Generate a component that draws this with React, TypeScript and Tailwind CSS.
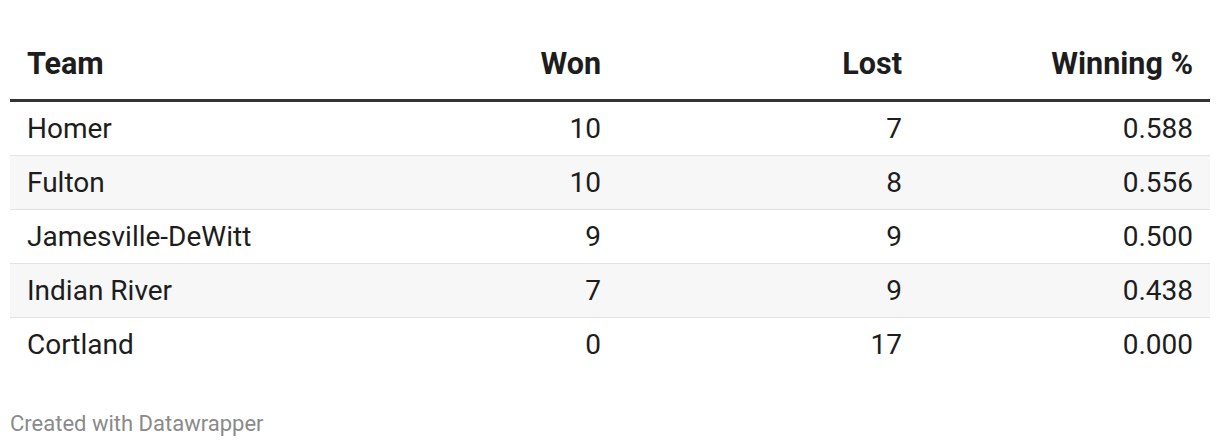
const rows = [
  { team: 'Homer', won: 10, lost: 7, pct: '0.588' },
  { team: 'Fulton', won: 10, lost: 8, pct: '0.556' },
  { team: 'Jamesville-DeWitt', won: 9, lost: 9, pct: '0.500' },
  { team: 'Indian River', won: 7, lost: 9, pct: '0.438' },
  { team: 'Cortland', won: 0, lost: 17, pct: '0.000' },
];

export default function App() {
  return (
    <div className="w-[1220px] h-[446px] bg-white px-[10px] text-[#1d1d1d]" style={{ fontFamily: 'Roboto, "Liberation Sans", sans-serif' }}>
      {/* Header */}
      <div className="grid grid-cols-[306px_302px_301px_291px] border-b-[3px] border-[#333333] pt-[46px] pb-[17px] text-[30.5px] leading-[36px] font-bold">
        <div className="pl-[17px]">Team</div>
        <div className="pr-[17px] text-right">Won</div>
        <div className="pr-[17px] text-right">Lost</div>
        <div className="pr-[17px] text-right">Winning %</div>
      </div>

      {/* Body */}
      {rows.map((r, i) => (
        <div
          key={r.team}
          className={`grid grid-cols-[306px_302px_301px_291px] h-[54px] items-center text-[28px] leading-[36px] ${
            i % 2 === 1 ? 'bg-[#f7f7f7]' : 'bg-white'
          } ${i < rows.length - 1 ? 'border-b border-[#e3e3e3]' : ''}`}
        >
          <div className="pl-[17px]">{r.team}</div>
          <div className="pr-[17px] text-right">{r.won}</div>
          <div className="pr-[17px] text-right">{r.lost}</div>
          <div className="pr-[17px] text-right">{r.pct}</div>
        </div>
      ))}

      {/* Footer */}
      <div className="pt-[39px] text-[22px] leading-[26px] text-[#8a8a8a]">Created with Datawrapper</div>
    </div>
  );
}
